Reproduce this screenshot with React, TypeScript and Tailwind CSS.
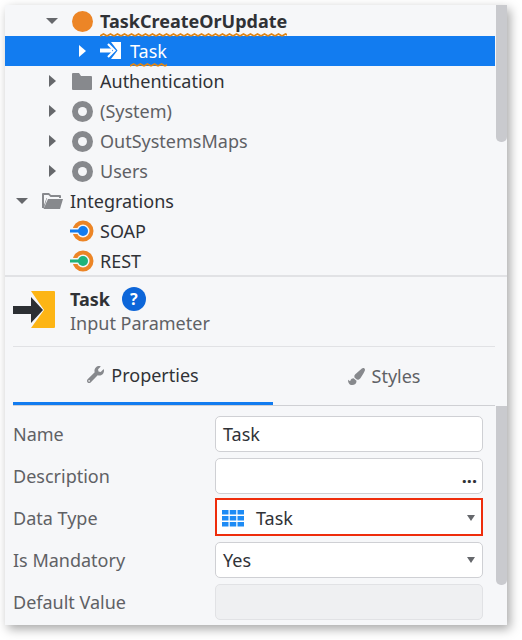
import React from "react";
import { FaPaintBrush, FaWrench } from "react-icons/fa";

const Caret = ({ open, className }: { open?: boolean; className: string }) => (
  <svg width="12" height="12" viewBox="0 0 12 12" className={className}>
    {open ? <path d="M0 3h12L6 9z" fill="currentColor" /> : <path d="M3 0v12l7-6z" fill="currentColor" />}
  </svg>
);

const ModuleIcon = () => (
  <span className="flex h-[21px] w-[21px] items-center justify-center rounded-full bg-[#87898d]">
    <span className="h-[9px] w-[9px] rounded-full bg-[#f6f7f9]" />
  </span>
);

const FolderClosed = () => (
  <svg width="22" height="20" viewBox="0 0 22 20">
    <path d="M1 3a1 1 0 0 1 1-1h6l2 3h10a1 1 0 0 1 1 1v12a1 1 0 0 1-1 1H2a1 1 0 0 1-1-1z" fill="#87898d" />
  </svg>
);

const FolderOpen = () => (
  <svg width="23" height="20" viewBox="0 0 23 20">
    <path d="M1 3a1 1 0 0 1 1-1h6l2 2h9a1 1 0 0 1 1 1v2H6L3 17H1z" fill="#87898d" />
    <path d="M7 8h15l-3 10H2.500z" fill="#87898d" />
    <path d="M3 4h4.500l2 2H18v1H5.500L3 14z" fill="#f6f7f9" />
  </svg>
);

const ServiceIcon = ({ color }: { color: string }) => (
  <svg width="24" height="22" viewBox="0 0 24 22">
    <circle cx="13" cy="11" r="8.500" fill="none" stroke="#ec8526" strokeWidth="4" />
    <rect x="0" y="8" width="9" height="6" fill="#f6f7f9" />
    <rect x="0" y="9.500" width="10" height="3" fill={color} />
    <circle cx="13" cy="11" r="5" fill={color} />
  </svg>
);

// hand drawn squiggle, the browser's wavy underline comes out too faint
const Squiggle = ({ id }: { id: string }) => (
  <svg className="absolute left-0 top-[24px] h-[4px] w-full" aria-hidden="true">
    <defs>
      <pattern id={id} width="7" height="4" patternUnits="userSpaceOnUse">
        <path d="M0 3 3.500 1 7 3" fill="none" stroke="#df8412" strokeWidth="1.600" />
      </pattern>
    </defs>
    <rect width="100%" height="4" fill={`url(#${id})`} />
  </svg>
);

const TreeRow = ({
  indent,
  children,
  selected,
}: {
  indent: string;
  children: React.ReactNode;
  selected?: boolean;
}) => (
  <div className={`flex h-[30px] shrink-0 items-center ${indent} ${selected ? "bg-[#127cf0]" : ""}`}>{children}</div>
);

const FieldLabel = ({ children }: { children: React.ReactNode }) => (
  <div className="w-[202px] shrink-0 text-[#5f6165]">{children}</div>
);

const SelectCaret = () => (
  <svg width="8" height="6" viewBox="0 0 8 6" className="ml-auto text-[#66686c]">
    <path d="M0 0h8L4 6z" fill="currentColor" />
  </svg>
);

const App = () => {
  return (
    <div className="h-[640px] w-[522px] overflow-hidden bg-white pl-[5px] pt-[5px] font-['Noto_Sans',sans-serif] text-[18px] leading-[24px] text-[#303236]">
      <div className="flex h-[620px] w-[502px] flex-col bg-[#f6f7f9] shadow-[3px_4px_10px_rgba(0,0,0,0.35)]">
        {/* Tree */}
        <div className="relative flex h-[270px] shrink-0 flex-col overflow-hidden pt-px">
          <div className="absolute right-0 top-0 h-[137px] w-[11px] rounded-b-[5px] bg-[#c9cace]" />
          <div className="w-[490px]">
            <TreeRow indent="pl-[41px]">
              <Caret open className="mr-[14px] text-[#66686c]" />
              <span className="mr-[7px] h-[21px] w-[21px] rounded-full bg-[#ec8526]" />
              <span className="relative font-bold">
                TaskCreateOrUpdate
                <Squiggle id="squiggle-action" />
              </span>
            </TreeRow>
            <TreeRow indent="pl-[71px]" selected>
              <Caret className="mr-[12px] text-white" />
              <svg width="22" height="20" viewBox="0 0 22 20" className="mr-[8px]">
                <path d="M11 1h10v17H11l6.500-8.500z" fill="#fff" />
                <path d="M0 7.500h12v4H0z" fill="#fff" />
                <path d="M8 3l6.500 6.500L8 16" fill="none" stroke="#fff" strokeWidth="2.200" />
              </svg>
              <span className="relative text-white">
                Task
                <Squiggle id="squiggle-task" />
              </span>
            </TreeRow>
            <TreeRow indent="pl-[41px]">
              <Caret className="mr-[11px] text-[#66686c]" />
              <span className="mr-[7px] flex w-[24px] justify-start pl-[2px]">
                <FolderClosed />
              </span>
              <span>Authentication</span>
            </TreeRow>
            {["(System)", "OutSystemsMaps", "Users"].map((name) => (
              <TreeRow key={name} indent="pl-[41px]">
                <Caret className="mr-[14px] text-[#66686c]" />
                <span className="mr-[7px]">
                  <ModuleIcon />
                </span>
                <span className="text-[#5f6165]">{name}</span>
              </TreeRow>
            ))}
            <TreeRow indent="pl-[11px]">
              <Caret open className="mr-[13px] text-[#66686c]" />
              <span className="mr-[6px]">
                <FolderOpen />
              </span>
              <span>Integrations</span>
            </TreeRow>
            <TreeRow indent="pl-[65px]">
              <span className="mr-[6px]">
                <ServiceIcon color="#127cf0" />
              </span>
              <span>SOAP</span>
            </TreeRow>
            <TreeRow indent="pl-[65px]">
              <span className="mr-[6px]">
                <ServiceIcon color="#1fb37a" />
              </span>
              <span>REST</span>
            </TreeRow>
          </div>
        </div>
        <div className="h-[2px] shrink-0 bg-[#e1e2e5]" />

        {/* Header */}
        <div className="ml-[8px] mr-[12px] flex h-[70px] shrink-0 items-center border-b border-[#e1e2e5] pb-[2px]">
          <svg width="43" height="37" viewBox="0 0 43 37" className="mr-[14px] -translate-y-px">
            <path d="M18 0h23a1 1 0 0 1 1 1v35a1 1 0 0 1-1 1H18l13-18z" fill="#fdb515" />
            <path d="M0 15h18V6l12 13-12 13v-9H0z" fill="#2c2f33" />
          </svg>
          <div>
            <div className="flex items-center font-bold">
              Task
              <span className="ml-[12px] flex h-[24px] w-[24px] items-center justify-center rounded-full bg-[#0d66d9] text-[16px] text-white">
                ?
              </span>
            </div>
            <div className="text-[#5f6165]">Input Parameter</div>
          </div>
        </div>

        {/* Tabs */}
        <div className="ml-[8px] mr-[12px] flex h-[59px] shrink-0 border-b border-[#cfd0d4]">
          <div className="flex w-[260px] items-center justify-center border-b-[3px] border-[#127cf0]">
            <FaWrench className="mr-[7px] text-[17px] text-[#87898d]" />
            <span>Properties</span>
          </div>
          <div className="flex flex-1 items-center justify-center text-[#5f6165]">
            <FaPaintBrush className="mr-[7px] text-[17px] text-[#87898d]" />
            <span>Styles</span>
          </div>
        </div>

        {/* Form */}
        <div className="relative flex flex-1 flex-col gap-[6px] pl-[8px] pt-[10px]">
          <div className="absolute right-0 top-0 h-[179px] w-[11px] rounded-b-[5px] bg-[#c9cace]" />
          <div className="flex h-[36px] items-center">
            <FieldLabel>Name</FieldLabel>
            <div className="flex h-[36px] w-[268px] items-center rounded-[5px] border border-[#cfd0d4] bg-white px-[7px]">
              Task
            </div>
          </div>
          <div className="flex h-[36px] items-center">
            <FieldLabel>Description</FieldLabel>
            <div className="flex h-[36px] w-[268px] items-center justify-end rounded-[5px] border border-[#cfd0d4] bg-white px-[5px] font-bold leading-none">
              ...
            </div>
          </div>
          <div className="flex h-[36px] items-center">
            <FieldLabel>Data Type</FieldLabel>
            <div className="flex h-[38px] w-[268px] items-center self-end border-2 border-[#ee2d0c] bg-white pl-[5px] pr-[6px] pt-[2px]">
              <svg width="22" height="17" viewBox="0 0 22 17" className="mr-[12px]">
                <path
                  d="M0 0h6.500v4.500H0zM7.750 0h6.500v4.500h-6.500zM15.500 0H22v4.500h-6.500zM0 6h6.500v4.500H0zM7.750 6h6.500v4.500h-6.500zM15.500 6H22v4.500h-6.500zM0 12h6.500v4.500H0zM7.750 12h6.500v4.500h-6.500zM15.500 12H22v4.500h-6.500z"
                  fill="#1d8bf5"
                />
              </svg>
              <span>Task</span>
              <SelectCaret />
            </div>
          </div>
          <div className="flex h-[36px] items-center">
            <FieldLabel>Is Mandatory</FieldLabel>
            <div className="flex h-[36px] w-[268px] items-center rounded-[5px] border border-[#cfd0d4] bg-white pl-[7px] pr-[7px]">
              <span>Yes</span>
              <SelectCaret />
            </div>
          </div>
          <div className="flex h-[36px] items-center">
            <FieldLabel>Default Value</FieldLabel>
            <div className="h-[36px] w-[268px] rounded-[5px] border border-[#e1e2e5] bg-[#eff0f2]" />
          </div>
        </div>
      </div>
    </div>
  );
};

export default App;
